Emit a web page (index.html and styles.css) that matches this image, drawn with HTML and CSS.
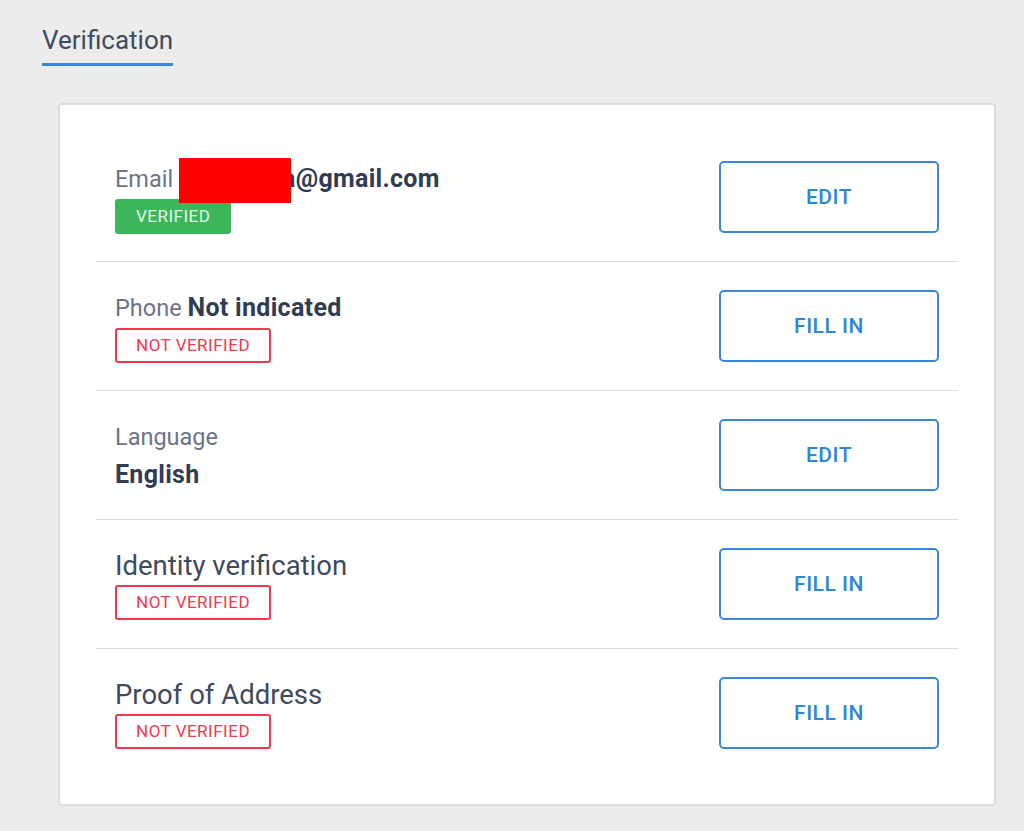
FILE: index.html
```html
<!DOCTYPE html>
<html lang="en">
<head>
    <meta charset="UTF-8">
    <meta name="viewport" content="width=device-width, initial-scale=1.0">
    <title>Verification</title>
    <link rel="stylesheet" href="styles.css">
</head>
<body>

    <div class="tabs">
        <span class="tab active">Verification</span>
    </div>

    <div class="card">

        <div class="row">
            <div class="info">
                <p class="line"><span class="label">Email</span> <span class="redact"></span><span class="value mail">a@gmail.com</span></p>
                <span class="badge ok">VERIFIED</span>
            </div>
            <button class="btn">EDIT</button>
        </div>

        <div class="row">
            <div class="info">
                <p class="line"><span class="label">Phone</span> <span class="value">Not indicated</span></p>
                <span class="badge bad">NOT VERIFIED</span>
            </div>
            <button class="btn">FILL IN</button>
        </div>

        <div class="row">
            <div class="info stack">
                <p class="line"><span class="label">Language</span></p>
                <p class="line"><span class="value">English</span></p>
            </div>
            <button class="btn">EDIT</button>
        </div>

        <div class="row">
            <div class="info">
                <p class="line big">Identity verification</p>
                <span class="badge bad">NOT VERIFIED</span>
            </div>
            <button class="btn">FILL IN</button>
        </div>

        <div class="row">
            <div class="info">
                <p class="line big">Proof of Address</p>
                <span class="badge bad">NOT VERIFIED</span>
            </div>
            <button class="btn">FILL IN</button>
        </div>

    </div>

</body>
</html>
```

FILE: styles.css
```css
body{
    margin:0;
    background:#ececec;
    font-family:Roboto, "Liberation Sans", Arial, sans-serif;
    color:#334059;
}

/* top tab */
.tabs{
    padding:25px 0 0 42px;
    height:103px;
    box-sizing:border-box;
}
.tab{
    display:inline-block;
    font-size:26px;
    line-height:30px;
    color:#3f4a60;
    padding-bottom:8px;
    border-bottom:3px solid #3a86d8;
}

.card{
    margin:0 28px 0 58px;
    background:#fff;
    border:2px solid #dadde0;
    border-radius:4px;
    padding:28px 36px 27px;
}

.row{
    display:flex;
    align-items:center;
    justify-content:space-between;
    height:128px;
    padding:0 19px;
    border-bottom:1px solid #d9dbde;
}
.row:last-child{
    border-bottom:none;
}

.info{
    display:flex;
    flex-direction:column;
    align-items:flex-start;
}

.line{
    margin:0;
    font-size:23.5px;
    line-height:35px;
    white-space:nowrap;
}
.stack{
    padding-top:3px;
}
.stack .line{
    line-height:37px;
}
.label{
    color:#6c7486;
}
.value{
    font-size:25px;
    font-weight:700;
    letter-spacing:0.3px;
    color:#313c52;
}
.big{
    font-size:27.5px;
    color:#414a5d;
}

/* red block hiding the mail name */
.redact{
    position:relative;
    display:inline-block;
    width:112px;
    height:20px;
}
.redact::after{
    content:"";
    position:absolute;
    left:0;
    top:-9px;
    width:112px;
    height:45px;
    background:#ff0000;
}
.mail{
    margin-left:-9px;
}

.badge{
    display:inline-block;
    margin-top:2px;
    font-size:17px;
    line-height:31px;
    padding:0 19px;
    border-radius:3px;
    letter-spacing:0.5px;
}
.ok{
    background:#3cb65b;
    color:#e6f6ea;
    border:2px solid #3cb65b;
}
.bad{
    color:#f0384e;
    border:2px solid #f0384e;
}

.btn{
    width:220px;
    height:72px;
    background:#fff;
    border:2px solid #3a87d9;
    border-radius:5px;
    color:#2e86d6;
    font-family:Roboto, "Liberation Sans", Arial, sans-serif;
    font-size:21px;
    font-weight:500;
    letter-spacing:0.5px;
    cursor:pointer;
}
```
